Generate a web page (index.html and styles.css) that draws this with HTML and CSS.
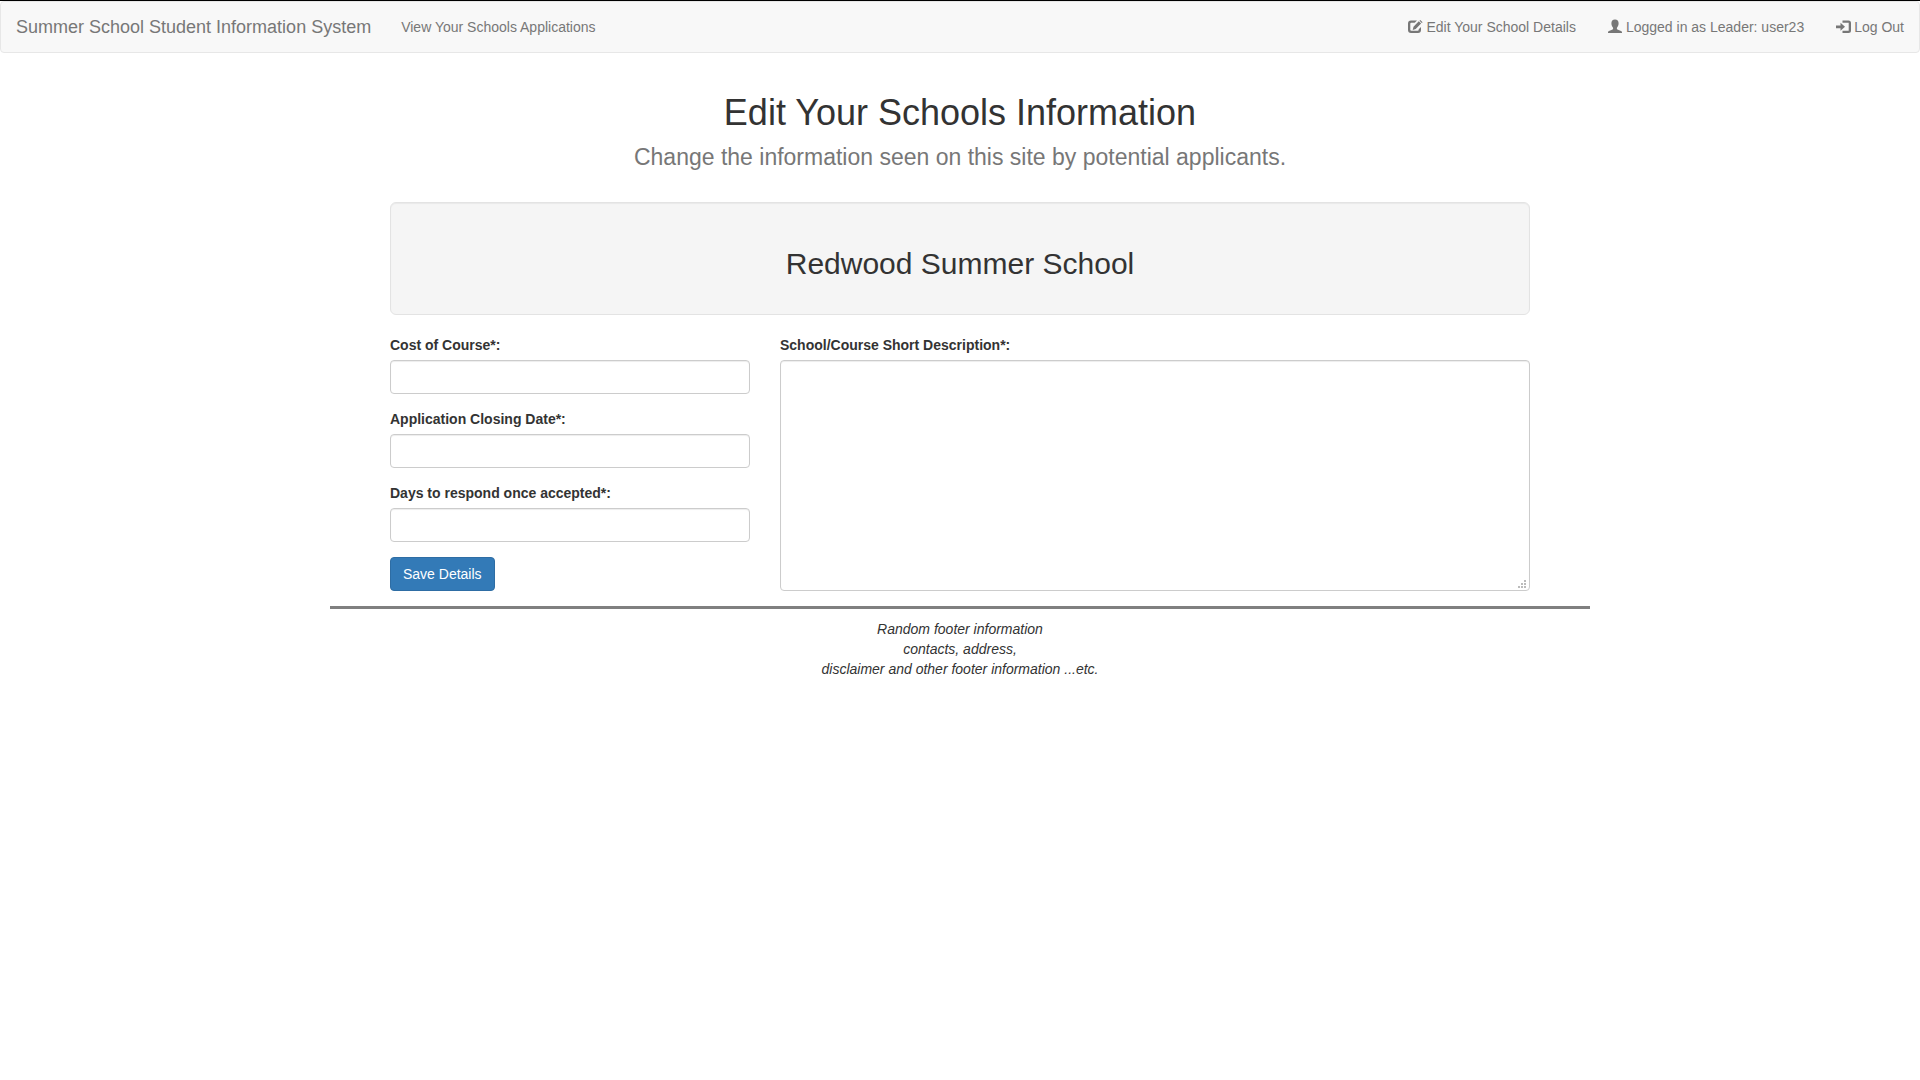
FILE: index.html
```html
<!DOCTYPE html>
<html lang="en">
<head>
<meta charset="utf-8">
<meta name="viewport" content="width=device-width, initial-scale=1">
<title>Summer School Student Information System</title>
<link rel="stylesheet" href="styles.css">
</head>
<body>
<nav class="navbar">
  <a class="brand" href="#">Summer School Student Information System</a>
  <a class="nav-link" href="#">View Your Schools Applications</a>
  <div class="nav-right">
    <a class="nav-link" href="#"><svg class="icon" viewBox="0 0 14 14" aria-hidden="true"><path d="M9 .5H3Q0 .5 0 3.500v6.500Q0 13 3 13h7Q13 13 13 10V7L10.700 9.300V9.700Q10.700 10.700 9.700 10.700H3.300Q2.300 10.700 2.300 9.700V3.800Q2.300 2.800 3.300 2.800H6.700Z"/><path d="M10.800 1.300 13.100 3.600 7.700 9 4.700 9.900 5.500 6.800ZM11.500.7 12.300 0 14.600 2.200 13.800 3Z"/></svg>Edit Your School Details</a>
    <a class="nav-link" href="#"><svg class="icon" viewBox="0 0 14 14" aria-hidden="true"><path d="M7-.5C4.500-.5 3.400 1.100 3.400 3.300c0 2 .8 3.500 1.500 4.300.4.600.3 1.500-.3 1.800L1 10.900C.2 11.300 0 11.700 0 12.500v.5h14V12.500c0-.8-.2-1.200-1-1.600L9.400 9.400c-.6-.3-.7-1.200-.3-1.800.7-.8 1.500-2.300 1.500-4.300C10.600 1.100 9.500-.5 7-.5Z"/></svg>Logged in as Leader: user23</a>
    <a class="nav-link" href="#"><svg class="icon" viewBox="0 0 14 14" aria-hidden="true"><path d="M6.500.5h6Q15 .5 15 3v7.500Q15 13 12.500 13h-6v-2.200h6.200V2.700H6.500Z"/><path d="M4.500 2.800 9 6.800 4.500 10.800V8.200H0V5.400H4.500Z"/></svg>Log Out</a>
  </div>
</nav>
<main class="container">
  <header class="page-title">
    <h1>Edit Your Schools Information</h1>
    <p>Change the information seen on this site by potential applicants.</p>
  </header>
  <section class="well"><h2>Redwood Summer School</h2></section>
  <form class="details">
    <div class="fields">
      <div class="field"><label for="cost">Cost of Course*:</label><input class="control" id="cost" type="text"></div>
      <div class="field"><label for="closing">Application Closing Date*:</label><input class="control" id="closing" type="text"></div>
      <div class="field"><label for="days">Days to respond once accepted*:</label><input class="control" id="days" type="text"></div>
      <button class="save" type="submit">Save Details</button>
    </div>
    <div class="field description">
      <label for="description">School/Course Short Description*:</label>
      <div class="textarea-wrap">
        <textarea class="control" id="description"></textarea>
        <svg class="grip" viewBox="0 0 8 8" aria-hidden="true"><path d="M6 0h2v2H6zM3 3h2v2H3zM6 3h2v2H6zM0 6h2v2H0zM3 6h2v2H3zM6 6h2v2H6z"/></svg>
      </div>
    </div>
  </form>
</main>
<footer class="footer">Random footer information<br>contacts, address,<br>disclaimer and other footer information ...etc.</footer>
</body>
</html>
```
FILE: styles.css
```css
* { box-sizing: border-box; }
body {
  margin: 0;
  border-top: 1px solid #000;
  background: #fff;
  color: #333;
  font: 14px/20px "Liberation Sans", Arial, sans-serif;
}
.navbar {
  display: flex;
  flex-wrap: wrap;
  border: 1px solid #e7e7e7;
  border-radius: 4px;
  background: #f8f8f8;
}
.navbar a { padding: 15px; color: #777; text-decoration: none; }
.navbar a:hover { color: #333; }
.brand { font-size: 18px; }
.nav-right { display: flex; flex-wrap: wrap; gap: 2px; margin-left: auto; }
.icon {
  width: 14px;
  height: 14px;
  margin-right: 4px;
  vertical-align: -2px;
  fill: currentColor;
  overflow: visible;
}
.container { max-width: 1170px; margin: 0 auto; padding: 40px 15px 15px; }
h1, h2, p { margin: 0; font-weight: 400; text-align: center; }
h1 { font-size: 36px; line-height: 40px; }
.page-title { margin-bottom: 32px; }
.page-title p { margin-top: 11px; color: #777; font-size: 23px; line-height: 26px; }
.well {
  margin-bottom: 20px;
  padding: 44px 24px 34px;
  border: 1px solid #e3e3e3;
  border-radius: 6px;
  background: #f5f5f5;
  box-shadow: inset 0 1px 1px rgba(0, 0, 0, .05);
}
h2 { font-size: 30px; line-height: 33px; }
.details { display: grid; grid-template-columns: 360fr 750fr; gap: 30px; }
.fields { display: flex; flex-direction: column; align-items: flex-start; gap: 15px; }
.field { display: flex; flex-direction: column; gap: 5px; width: 100%; }
label { font-weight: 700; }
.control {
  display: block;
  width: 100%;
  height: 34px;
  padding: 6px 12px;
  border: 1px solid #ccc;
  border-radius: 4px;
  background: #fff;
  color: #555;
  font: inherit;
  box-shadow: inset 0 1px 1px rgba(0, 0, 0, .075);
}
.textarea-wrap { position: relative; flex: 1; }
.textarea-wrap .control { height: 100%; resize: vertical; }
.control::-webkit-resizer { background: transparent; }
.grip {
  position: absolute;
  right: 4px;
  bottom: 3px;
  width: 8px;
  height: 8px;
  fill: #bbb;
  pointer-events: none;
}
.save {
  padding: 6px 12px;
  border: 1px solid #2e6da4;
  border-radius: 4px;
  background: #337ab7;
  color: #fff;
  font: inherit;
  cursor: pointer;
}
.footer {
  max-width: 1260px;
  margin: 0 auto;
  padding: 10px 0;
  border-top: 3px solid #808080;
  font-style: italic;
  text-align: center;
}
@media (max-width: 700px) {
  .details { grid-template-columns: 1fr; }
  .textarea-wrap .control { height: 231px; }
}
```
